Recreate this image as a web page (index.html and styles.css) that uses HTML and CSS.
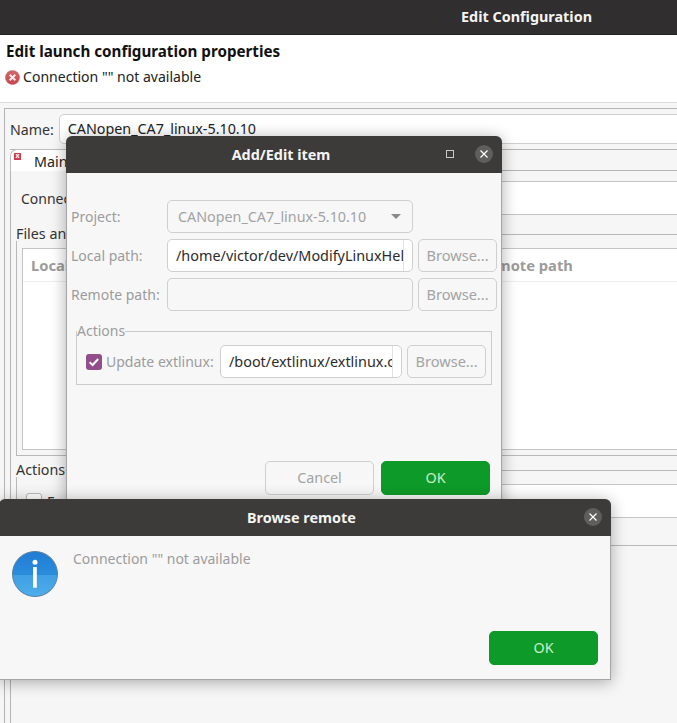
FILE: index.html
```html
<!DOCTYPE html>
<html>
<head>
<meta charset="utf-8">
<title>Edit Configuration</title>
<link rel="stylesheet" href="styles.css">
</head>
<body>
<div class="desktop">
  <main class="main">
    <header class="titlebar main-title">Edit Configuration</header>
    <section class="banner">
      <h1 class="banner-title">Edit launch configuration properties</h1>
      <div class="banner-msg">
        <svg class="err-icon" viewBox="0 0 16 16"><defs><linearGradient id="err" x1="0" y1="0" x2="0" y2="1"><stop offset="0" stop-color="#d8646a"/><stop offset="1" stop-color="#c9444c"/></linearGradient></defs><circle cx="8" cy="8" r="7.5" fill="url(#err)" stroke="#b5636a" stroke-width="0.6"/><path d="M5 5l6 6M11 5l-6 6" stroke="#f8eeee" stroke-width="2.1"/></svg>
        <span>Connection "" not available</span>
      </div>
    </section>
    <section class="gutter">
      <div class="frame">
        <div class="name-row">
          <span class="name-label">Name:</span>
          <div class="name-input">CANopen_CA7_linux-5.10.10</div>
        </div>
        <div class="tabfolder">
          <div class="tabstrip">
            <div class="tab"><span class="tab-x">x</span><span class="tab-label">Main</span></div>
          </div>
          <div class="tabbody">
            <div class="conn-row">
              <span class="conn-label">Connection:</span>
              <div class="conn-input"></div>
            </div>
            <fieldset class="files-box">
              <legend class="box-title">Files and folders</legend>
              <div class="table">
                <div class="table-head"><span>Local path</span><span class="remote-col">Remote path</span></div>
              </div>
            </fieldset>
            <fieldset class="actions-box">
              <legend class="box-title">Actions</legend>
              <div class="act-row"><span class="act-check"></span><span class="act-label">Execute</span><div class="act-input"></div></div>
            </fieldset>
          </div>
        </div>
      </div>
    </section>
  </main>

  <div class="window addedit">
    <div class="titlebar win-title addedit-title">
      <span>Add/Edit item</span>
      <span class="max-btn"></span>
      <span class="close-btn"><svg viewBox="0 0 18 18"><path d="M5.5 5.5l7 7M12.5 5.5l-7 7" stroke="#fff" stroke-width="1.2"/></svg></span>
    </div>
    <div class="addedit-body">
      <div class="form">
        <span class="lbl">Project:</span>
        <div class="field combo">CANopen_CA7_linux-5.10.10<span class="caret"></span></div>
        <span></span>
        <span class="lbl">Local path:</span>
        <div class="field active"><span class="clip">/home/victor/dev/ModifyLinuxHelper</span></div>
        <div class="btn">Browse...</div>
        <span class="lbl">Remote path:</span>
        <div class="field"></div>
        <div class="btn">Browse...</div>
      </div>
      <fieldset class="group">
        <legend class="legend">Actions</legend>
        <div class="group-row">
          <span class="check"><svg viewBox="0 0 16 16"><path d="M3.6 8.2l3 2.8 5.6-6" fill="none" stroke="#fff" stroke-width="2"/></svg></span>
          <span class="lbl check-lbl">Update extlinux:</span>
          <div class="field active ext"><span class="clip">/boot/extlinux/extlinux.conf</span></div>
          <div class="btn">Browse...</div>
        </div>
      </fieldset>
      <div class="actions">
        <div class="btn wide">Cancel</div>
        <div class="btn wide primary">OK</div>
      </div>
    </div>
  </div>

  <div class="window browse">
    <div class="titlebar win-title browse-title">
      <span>Browse remote</span>
      <span class="close-btn"><svg viewBox="0 0 18 18"><path d="M5.5 5.5l7 7M12.5 5.5l-7 7" stroke="#fff" stroke-width="1.2"/></svg></span>
    </div>
    <div class="browse-body">
      <div class="browse-msg">
        <svg class="info" viewBox="0 0 46 46">
          <defs>
            <clipPath id="lower"><rect x="0" y="24" width="46" height="22"/></clipPath>
            <linearGradient id="infoTop" x1="0" y1="0" x2="0" y2="1"><stop offset="0" stop-color="#1f7dd4"/><stop offset="0.52" stop-color="#2c8cdc"/></linearGradient>
            <linearGradient id="infoLow" x1="0" y1="0" x2="0" y2="1"><stop offset="0.52" stop-color="#3f9fe3"/><stop offset="1" stop-color="#4fade9"/></linearGradient>
          </defs>
          <circle cx="23" cy="23" r="22.5" fill="url(#infoTop)" stroke="#5d7f9e" stroke-width="1"/>
          <circle cx="23" cy="23" r="22" fill="url(#infoLow)" clip-path="url(#lower)"/>
          <circle cx="23" cy="11.3" r="2.5" fill="#fff"/>
          <rect x="21.1" y="16" width="3.7" height="20.7" fill="#fff"/>
        </svg>
        <span class="browse-text">Connection "" not available</span>
      </div>
      <div class="actions"><div class="btn wide primary">OK</div></div>
    </div>
  </div>
</div>
</body>
</html>
```

FILE: styles.css
```css
* { box-sizing: border-box; }
html, body { margin: 0; padding: 0; }
body { font-family: "Noto Sans", "Open Sans", sans-serif; font-size: 14px; color: #3d3d3d; }
.desktop { position: relative; width: 677px; height: 723px; overflow: hidden; background: #f6f6f6; }
.main { display: flex; flex-direction: column; height: 723px; }
.titlebar { background: #302e2e; color: #f4f4f4; font-weight: 700; font-size: 14.4px; display: flex; align-items: center; justify-content: center; flex: none; }
.main-title { height: 35px; padding-left: 376px; padding-bottom: 1px; border-bottom: 1px solid #222; }
.banner { height: 67px; background: #fff; padding: 6px 6px 0; flex: none; }
.banner-title { margin: 0; font-size: 15.2px; line-height: 20px; font-weight: 700; color: #111; }
.banner-msg { display: flex; align-items: center; gap: 3px; margin-top: 6px; font-size: 14.05px; line-height: 20px; color: #222; }
.err-icon { width: 15px; height: 15px; flex: none; margin-left: -1px; }
.gutter { flex: 1; border-top: 1px solid #dcdcdc; padding: 5px 0 0 4px; display: flex; min-height: 0; }
.frame { flex: 1; border: solid #b4b4b4; border-width: 1px 0 0 1px; padding: 5px 0 0 5px; display: flex; flex-direction: column; margin-right: -10px; }
.name-row { display: flex; align-items: center; height: 30px; flex: none; margin-bottom: 5px; gap: 5px; }
.name-label { color: #333; font-size: 14.2px; }
.name-input { flex: 1; height: 30px; border: 1px solid #cfcfcf; border-radius: 5px 0 0 5px; background: #fff; padding: 0 8px; line-height: 27px; color: #222; font-size: 14.3px; }
.tabfolder { flex: 1; display: flex; flex-direction: column; border: solid #b4b4b4; border-width: 0 0 0 1px; min-height: 0; position: relative; }
.tabstrip { height: 22px; flex: none; border-top: 1px solid #b4b4b4; border-bottom: 1px solid #b4b4b4; margin-left: -1px; background: #f6f6f6; }
.tab { width: 80px; height: 22px; margin-top: -1px; background: #fff; border: 1px solid #bdbdbd; border-bottom: 0; border-radius: 7px 7px 0 0; display: flex; padding-left: 23px; line-height: 24px; position: relative; color: #222; font-size: 14.3px; }
.tab-x { position: absolute; left: 3px; top: 3px; width: 7px; height: 7px; background: #d23a4e; color: #fff; font-size: 7px; line-height: 6px; text-align: center; font-weight: 700; }
.tabbody { flex: 1; background: #f6f6f6; padding: 0 0 0 5px; display: flex; flex-direction: column; min-height: 0; }
.conn-row { display: flex; align-items: center; height: 34px; margin-top: 10px; margin-left: 5px; gap: 8px; flex: none; }
.conn-label { width: 102px; color: #333; }
.conn-input { flex: 1; height: 34px; border: 1px solid #c4c4c4; background: #fff; }
fieldset { margin: 0; min-width: 0; }
.box-title { padding: 0; line-height: 14px; height: 14px; color: #333; background: #f6f6f6; font-size: 14.3px; }
.files-box { height: 229px; margin-top: 12px; border: solid #b9b9b9; border-width: 1px 0 1px 1px; padding: 7px 0 5px 5px; flex: none; }
.files-box .box-title { margin-left: -6px; }
.table { height: 202px; border: 1px solid #c4c4c4; border-right: 0; background: #fff; }
.table-head { height: 33px; border-bottom: 1px solid #eee; display: flex; font-weight: 700; color: #9b9b9b; font-size: 14.7px; line-height: 32px; padding-left: 8px; }
.remote-col { margin-left: 371px; }
.actions-box { height: 83px; margin-top: 7px; border: solid #b9b9b9; border-width: 1px 0 1px 1px; padding: 7px 0 0 9px; flex: none; }
.actions-box .box-title { margin-left: -10px; }
.act-row { display: flex; align-items: center; gap: 5px; height: 34px; }
.act-check { width: 16px; height: 16px; border: 1px solid #bbb; border-radius: 3px; background: #fff; flex: none; }
.act-label { color: #333; width: 90px; flex: none; }
.act-input { flex: 1; height: 34px; border: 1px solid #c4c4c4; background: #fff; }

.window { position: absolute; box-shadow: 0 2px 16px rgba(0,0,0,.33); border-radius: 7px 7px 0 0; border: solid #a6a6a6; border-width: 0 1px 1px 1px; background: #f7f7f7; display: flex; flex-direction: column; }
.win-title { height: 37px; border-radius: 6px 6px 0 0; position: relative; background: #3d3b39; margin: 0 -1px; }
.addedit-title { padding-right: 6px; }
.browse-title { padding-right: 7px; }
.close-btn { position: absolute; right: 9px; top: 9px; width: 18px; height: 18px; border-radius: 50%; background: #5f5e5d; }
.close-btn svg { display: block; width: 18px; height: 18px; }
.max-btn { position: absolute; right: 48px; top: 14px; width: 8px; height: 8px; border: 1px solid #c9c9c9; }

.addedit { left: 66px; top: 136px; width: 436px; height: 380px; }
.addedit-body { flex: 1; padding: 27px 4px 0; color: #999; display: flex; flex-direction: column; }
.form { display: grid; grid-template-columns: 91px 246px 79px; column-gap: 5px; row-gap: 6px; grid-auto-rows: 33px; align-items: stretch; }
.lbl { align-self: center; color: #9c9c9c; font-size: 14px; white-space: nowrap; }
.field { border: 1px solid #cfcfcf; border-radius: 5px; background: #f7f7f7; font-size: 14.3px; display: flex; align-items: center; padding: 0 8px; min-width: 0; }
.field.active { background: #fff; color: #2b2b2b; font-size: 14.4px; }
.clip { overflow: hidden; white-space: nowrap; flex: 1; border-right: 1px solid #e2e2e2; height: 100%; line-height: 31px; }
.combo { color: #a3a3a3; padding-left: 10px; justify-content: space-between; }
.caret { border: 5px solid transparent; border-top: 5px solid #8a8a8a; border-bottom: 0; margin-right: 3px; }
.btn { border: 1px solid #cfcfcf; border-radius: 5px; background: #f7f7f7; color: #a3a3a3; font-size: 14.6px; display: flex; align-items: center; justify-content: center; height: 33px; padding-bottom: 2px; }
.group { margin: 13px 5px 0; padding: 7px 5px 6px 9px; border: 1px solid #cbcbcb; height: 61px; min-width: 0; }
.legend { padding: 0; color: #9c9c9c; font-size: 14px; line-height: 14px; margin-left: -9px; }
.group-row { display: flex; align-items: center; gap: 5px; }
.check { width: 16px; height: 16px; background: #924d8b; border-radius: 3px; flex: none; margin-right: -1px; }
.check svg { display: block; }
.check-lbl { width: 109px; flex: none; }
.ext { width: 182px; height: 33px; flex: none; }
.group-row .btn { width: 79px; flex: none; }
.actions { margin-top: auto; display: flex; justify-content: flex-end; gap: 7px; }
.addedit .actions { margin: 76px 7px 0 0; }
.wide { width: 109px; height: 34px; font-size: 14.3px; }
.primary { background: #0e9a28; border-color: #0e9a28; color: #c9eec8; }

.browse { left: -1px; top: 499px; width: 612px; height: 181px; }
.browse-body { flex: 1; display: flex; flex-direction: column; padding: 15px 12px 14px 12px; }
.browse-msg { display: flex; gap: 15px; }
.info { width: 46px; height: 46px; flex: none; }
.browse-text { color: #9c9c9c; font-size: 14px; line-height: 16px; }
```
